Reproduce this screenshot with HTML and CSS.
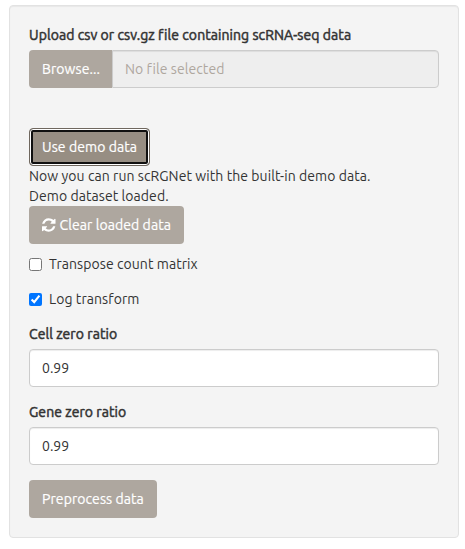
FILE: index.html
```html
<!DOCTYPE html>
<html lang="en">
<head>
<meta charset="utf-8">
<title>scRGNet</title>
<link rel="stylesheet" href="styles.css">
</head>
<body>
<form class="well">
  <label class="control-label">Upload csv or csv.gz file containing scRNA-seq data</label>
  <div class="input-group">
    <span class="btn btn-file">Browse...</span>
    <div class="file-name">No file selected</div>
  </div>
  <button type="button" class="btn btn-demo">Use demo data</button>
  <div class="message">Now you can run scRGNet with the built-in demo data.</div>
  <div class="message">Demo dataset loaded.</div>
  <button type="button" class="btn btn-clear">
    <svg class="icon" viewBox="0 0 1536 1536"><path d="M1511 928q0 5-1 7-64 268-268 434.500t-478 166.500q-146 0-282.500-55t-243.500-157l-129 129q-19 19-45 19t-45-19-19-45v-448q0-26 19-45t45-19h448q26 0 45 19t19 45-19 45l-137 137q71 66 161 102t187 36q134 0 250-65t186-179q11-17 53-117 8-23 30-23h192q13 0 22.500 9.500t9.500 22.500zM1536 128v448q0 26-19 45t-45 19h-448q-26 0-45-19t-19-45 19-45l138-138q-148-137-349-137-134 0-250 65t-186 179q-11 17-53 117-8 23-30 23h-199q-13 0-22.500-9.500t-9.500-22.500v-7q65-268 270-434.500t480-166.500q146 0 284 55.500t245 156.500l130-129q19-19 45-19t45 19 19 45z"/></svg>
    Clear loaded data
  </button>
  <label class="checkbox"><input type="checkbox">Transpose count matrix</label>
  <label class="checkbox"><input type="checkbox" checked>Log transform</label>
  <div class="form-group">
    <label class="control-label" for="cell">Cell zero ratio</label>
    <input class="form-control" id="cell" type="text" value="0.99">
  </div>
  <div class="form-group">
    <label class="control-label" for="gene">Gene zero ratio</label>
    <input class="form-control" id="gene" type="text" value="0.99">
  </div>
  <button type="button" class="btn btn-preprocess">Preprocess data</button>
</form>
</body>
</html>
```
FILE: styles.css
```css
* { box-sizing: border-box; }
body {
  margin: 0;
  padding: 5px 6px 0 9px;
  background: #fff;
  color: #333;
  font: 14px/20px "Ubuntu", "Noto Sans", sans-serif;
  letter-spacing: .07px;
}
.well {
  display: flex;
  flex-direction: column;
  align-items: flex-start;
  width: 450px;
  height: 533px;
  padding: 19px;
  background: #f4f4f4;
  border: 1px solid #e2e2e2;
  border-radius: 4px;
  box-shadow: inset 0 1px 1px rgba(0, 0, 0, .05);
}
.control-label {
  display: block;
  margin-bottom: 5px;
  -webkit-text-stroke: .5px #333;
  white-space: nowrap;
}
.btn {
  display: flex;
  align-items: center;
  height: 38px;
  padding: 0 13px;
  border: 0;
  border-radius: 4px;
  background: #aea79f;
  color: #fff;
  font: inherit;
  letter-spacing: .08px;
  -webkit-text-stroke: .2px #fff;
  white-space: nowrap;
}
.input-group {
  display: flex;
  width: 410px;
  margin-bottom: 40px;
}
.btn-file {
  width: 83px;
  border-radius: 4px 0 0 4px;
}
.file-name {
  flex: 1;
  height: 38px;
  padding: 8px 12px;
  border: 1px solid #ccc;
  border-radius: 0 4px 4px 0;
  background: #eee;
  color: #aea79f;
  box-shadow: inset 0 1px 1px rgba(0, 0, 0, .075);
}
.btn-demo {
  width: 121px;
  background: #978e83;
  border: 1px solid #6f675e;
  padding: 0 12px;
  box-shadow: inset 0 0 0 1px #fff, inset 0 0 0 3px #101010;
}
.message { white-space: nowrap; }
.btn-clear {
  width: 155px;
  margin-bottom: 10px;
}
.btn-preprocess { width: 128px; }
.icon {
  width: 14px;
  height: 14px;
  margin-right: 4px;
  fill: #fff;
}
.checkbox {
  display: flex;
  align-items: center;
  height: 20px;
  margin-bottom: 15px;
  white-space: nowrap;
}
.checkbox input {
  width: 13px;
  height: 13px;
  margin: 1px 7px 0 0;
}
.form-group { width: 410px; margin-bottom: 15px; }
.form-control {
  display: block;
  width: 100%;
  height: 38px;
  padding: 8px 12px;
  border: 1px solid #ccc;
  border-radius: 4px;
  background: #fff;
  color: #333;
  font: inherit;
  box-shadow: inset 0 1px 1px rgba(0, 0, 0, .075);
}
```
